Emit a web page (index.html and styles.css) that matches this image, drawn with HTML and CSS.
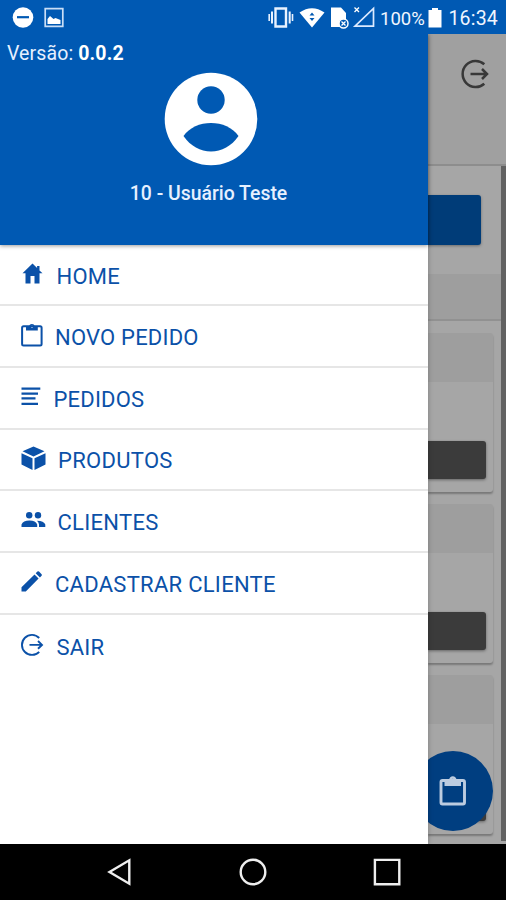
FILE: index.html
```html
<!DOCTYPE html>
<html lang="pt-BR">
<head>
<meta charset="utf-8">
<title>Menu</title>
<link rel="stylesheet" href="styles.css">
</head>
<body>
<div class="screen">
  <header class="status">
    <svg class="status-left" width="60" height="24" viewBox="8 6 60 24">
      <circle cx="23" cy="17.500" r="10.300" fill="#fff"/>
      <path d="M17 17.200h12" stroke="#0059b3" stroke-width="2.200"/>
      <path d="M45.200 8.700h17.600v17.600H45.200z" fill="none" stroke="#c9def6" stroke-width="1.700"/>
      <path d="M47.500 24v-5l2.500-3 3.500 3 2-1 5 2v4z" fill="#fff"/>
    </svg>
    <svg class="status-icons" width="110" height="24" viewBox="266 6 110 24">
      <g fill="none" stroke="#e8f2ff">
        <path d="M275.500 8.500h10.500v18h-10.500z" stroke-width="2.400"/>
        <path d="M272 11.500v12M289.700 11.500v12" stroke-width="2"/>
        <path d="M269.200 14v7M292.500 14v7" stroke-width="1.600"/>
      </g>
      <path d="M299.500 12.500q12.500-8.500 25 0L312 27.500z" fill="#fff"/>
      <path d="M309.500 15.500l2.500-3 2.500 3zM309.500 18l2.500 3 2.500-3z" fill="#0059b3"/>
      <path d="M331 7.500h10l5 5.500v14h-15z" fill="#fff"/>
      <circle cx="343.500" cy="23.500" r="4.500" fill="#0059b3" stroke="#fff" stroke-width="1.500"/>
      <path d="M341.500 21.500l4 4m0-4l-4 4" stroke="#fff" stroke-width="1.300"/>
      <path d="M355 26.200h18.500V8.500z" fill="none" stroke="#dceaff" stroke-width="1.700"/>
      <path d="M354.500 7.500l4.500 4.500m0-4.500l-4.500 4.500" stroke="#fff" stroke-width="1.300"/>
    </svg>
    <span class="percent">100%</span>
    <svg class="battery" width="14" height="20" viewBox="0 0 14 20"><path d="M4 0h6v2h3.500v17.500H.5V2H4z" fill="#fff"/></svg>
    <span class="clock">16:34</span>
  </header>

  <main class="app">
    <aside class="drawer">
      <section class="profile">
        <p class="version">Versão: <b>0.0.2</b></p>
        <svg class="avatar" width="94" height="94" viewBox="0 0 94 94">
          <circle cx="47" cy="47" r="46.300" fill="#fff"/>
          <circle cx="47" cy="28" r="13.700" fill="#0059b3"/>
          <path d="M19.500 64C31 46.500 63 46.500 74.500 64C61 84.500 33 84.500 19.500 64z" fill="#0059b3"/>
        </svg>
        <p class="user">10 - Usuário Teste</p>
      </section>
      <nav class="menu">
        <a class="item home"><svg width="23" height="24" viewBox="0 0 23 24"><path d="M11.500 1.500L1.500 11.300h3V21.500h5V14h4v7.500h5V11.300h3L18.500 8.400V4h-2.400v2z"/></svg><span>HOME</span></a>
        <a class="item novo"><svg width="22" height="24" viewBox="0 0 22 24"><rect x="1.100" y="3.200" width="19.500" height="19.200" rx="1.500" fill="none" stroke="#0b51a8" stroke-width="2"/><path fill-rule="evenodd" d="M5 3.200h3a3 3 0 0 1 5.800 0h3V7.600H5zM9.900 3.700a1.100 1.100 0 1 0 2.200 0a1.100 1.100 0 1 0-2.200 0z"/></svg><span>NOVO PEDIDO</span></a>
        <a class="item pedidos"><svg width="20" height="24" viewBox="0 0 20 24"><path d="M.5 3.700h18.800M.5 8.700h16.500M.5 13.400h14M.5 18.800h16.500" stroke="#0b51a8" stroke-width="2.300"/></svg><span>PEDIDOS</span></a>
        <a class="item produtos"><svg width="25" height="25" viewBox="0 0 25 25"><path d="M1.500 5.300L12.500.5l11 4.800L12.500 10.600zM.5 7.200l11 5V24L.5 18.500zM24.500 7.200l-11 5V24l11-5.500z"/></svg><span>PRODUTOS</span></a>
        <a class="item clientes"><svg width="25" height="24" viewBox="0 0 25 24"><circle cx="8.200" cy="6.300" r="3.200"/><circle cx="17" cy="6.300" r="3.200"/><path d="M.5 18v-2.500Q2 11.700 8.500 11.500Q14.800 11.700 16.200 15.500V18zM18 18v-2.500q-.2-2.200-2-3.800Q23 12 24.300 15.500V18z"/></svg><span>CLIENTES</span></a>
        <a class="item cadastrar"><svg width="22" height="24" viewBox="0 0 22 24"><path d="M.5 21.500v-4.200L13.500 4.500l4.100 4.100L4.800 21.500zM14.700 3.300l1.700-1.700q.8-.7 1.600 0l2.600 2.600q.7.800 0 1.600l-1.700 1.700z"/></svg><span>CADASTRAR CLIENTE</span></a>
        <a class="item sair"><svg width="23" height="24" viewBox="0 0 23 24" fill="none" stroke="#0b51a8" stroke-width="1.900"><path d="M18.200 5A10 10 0 1 0 18.200 18.800M8.500 11.900h12.500M17 8l4 3.900-4 3.900"/></svg><span>SAIR</span></a>
      </nav>
    </aside>

    <div class="page">
      <div class="toolbar">
        <svg width="30" height="32" viewBox="0 0 30 32" fill="none" stroke="#383838" stroke-width="2.500"><path d="M24.300 6.300A13 13 0 1 0 24.300 25.700M10.500 16h16M22 11l5 5-5 5"/></svg>
      </div>
      <div class="content">
        <div class="list">
          <div class="action"></div>
          <div class="band"></div>
          <div class="card"><div class="card-head"></div><div class="card-button"></div></div>
          <div class="card"><div class="card-head"></div><div class="card-button"></div></div>
          <div class="card"><div class="card-head"></div><div class="card-button"></div></div>
        </div>
        <div class="scroll"></div>
      </div>
      <div class="fab">
        <svg width="28" height="32" viewBox="0 0 28 32"><rect x="2" y="5.500" width="23.500" height="23.500" rx="1.500" fill="none" stroke="#bccce0" stroke-width="2.900"/><path fill-rule="evenodd" d="M5.500 5h4.300q1-3.800 4-3.800T17.800 5H22v6H5.500zM12.300 5.200a1.500 1.500 0 1 0 3 0a1.500 1.500 0 1 0-3 0z" fill="#bccce0"/></svg>
      </div>
    </div>
  </main>

  <footer class="system">
    <svg width="28" height="30" viewBox="0 0 28 30"><path d="M24.300 3.300v23.400L4.500 15z"/></svg>
    <svg width="28" height="30" viewBox="0 0 28 30"><circle cx="14" cy="15" r="12.300"/></svg>
    <svg width="28" height="30" viewBox="0 0 28 30"><path d="M1.900 2.900h24.400v24.400H1.900z"/></svg>
  </footer>
</div>
</body>
</html>
```

FILE: styles.css
```css
* { box-sizing: border-box; }
body { margin: 0; font-family: Roboto, "Liberation Sans", sans-serif; }
p { margin: 0; }
svg { display: block; flex: none; }

.screen {
  width: 506px;
  height: 900px;
  display: flex;
  flex-direction: column;
  overflow: hidden;
}

.status {
  height: 34px;
  flex: none;
  display: flex;
  align-items: center;
  padding: 2px 8px 0;
  background: #0059b3;
  color: #f0f6ff;
  font-size: 19px;
  line-height: 24px;
  white-space: nowrap;
}
.status-icons { margin-left: 198px; }
.percent { width: 46px; margin: 1px 0 0 4px; font-size: 18.500px; }
.battery { margin-left: 3px; }
.clock { margin: 1px 0 0 6px; letter-spacing: 0.200px; font-size: 19.500px; }

.app { height: 810px; flex: none; display: flex; }

.drawer {
  width: 428px;
  flex: none;
  background: #fff;
  z-index: 1;
  box-shadow: 0 0 5px rgba(0, 0, 0, 0.25);
  clip-path: inset(0 -10px 0 0);
}
.profile {
  height: 211px;
  display: flex;
  flex-direction: column;
  align-items: center;
  background: #0059b3;
  color: #e6f0ff;
  box-shadow: 0 1px 4px rgba(0, 0, 0, 0.4);
}
.version {
  align-self: flex-start;
  margin: 8px 0 0 7px;
  font-size: 19.500px;
  line-height: 24px;
  letter-spacing: 0.120px;
}
.version b { color: #fff; }
.avatar { margin-top: 6px; margin-right: 6px; }
.user {
  margin: 16px 11px 0 0;
  font-size: 19.400px;
  line-height: 24px;
  font-weight: 500;
}

.item {
  height: 61.800px;
  display: flex;
  align-items: center;
  padding: 0 0 2px 21px;
  border-bottom: 2px solid #e6e6e6;
  color: #0b51a8;
  fill: #0b51a8;
  font-size: 22px;
  line-height: 26px;
  letter-spacing: 0.200px;
  white-space: nowrap;
}
.item span { margin-top: 6px; }
.home { height: 61px; }
.home span { margin-left: 12.500px; }
.novo span { margin-left: 12px; }
.pedidos span { margin-left: 12.500px; }
.produtos span { margin-left: 12px; letter-spacing: 0.300px; }
.clientes svg { margin-top: 2px; }
.clientes span { margin-left: 11.500px; letter-spacing: 0.300px; }
.cadastrar span { margin-left: 12px; letter-spacing: 0.280px; }
.sair { border-bottom-color: transparent; }
.sair svg { fill: none; margin-top: 3px; }
.sair span { margin: 8px 0 0 12.500px; }

.page {
  position: relative;
  width: 78px;
  flex: none;
  background: #a6a6a6;
}
.toolbar {
  height: 132px;
  padding: 24px 0 0 32px;
  background: #a0a0a0;
  border-bottom: 2px solid #8d8d8d;
}
.content { height: 678px; display: flex; justify-content: space-between; }
.list { width: 73px; }
.scroll { width: 5px; height: 675px; background: #626262; }
.action {
  width: 53px;
  height: 50px;
  margin-top: 29px;
  background: #003c78;
  border-radius: 0 3px 3px 0;
  box-shadow: 0 1px 3px rgba(0, 0, 0, 0.35);
}
.band {
  height: 47px;
  margin-top: 29px;
  background: #9e9e9e;
  border-bottom: 2px solid #919191;
}
.card {
  width: 65px;
  height: 159px;
  margin-top: 12px;
  background: #a6a6a6;
  border-radius: 0 3px 3px 0;
  box-shadow: 0 2px 2px rgba(0, 0, 0, 0.28);
}
.card-head { height: 49px; background: #9e9e9e; border-radius: 0 3px 0 0; }
.card-button {
  width: 58px;
  height: 38px;
  margin-top: 59px;
  background: #3b3b3b;
  border-radius: 0 3px 3px 0;
  box-shadow: 0 1px 3px rgba(0, 0, 0, 0.4);
}
.fab {
  position: absolute;
  left: -15px;
  bottom: 13px;
  width: 80px;
  height: 80px;
  border-radius: 50%;
  background: #003e80;
  display: flex;
  align-items: center;
  justify-content: center;
}

.system {
  height: 56px;
  flex: none;
  display: flex;
  justify-content: space-between;
  align-items: center;
  padding: 0 105px 0 105px;
  background: #000;
}
.system svg { fill: none; stroke: #eee; stroke-width: 2.400; }
```
